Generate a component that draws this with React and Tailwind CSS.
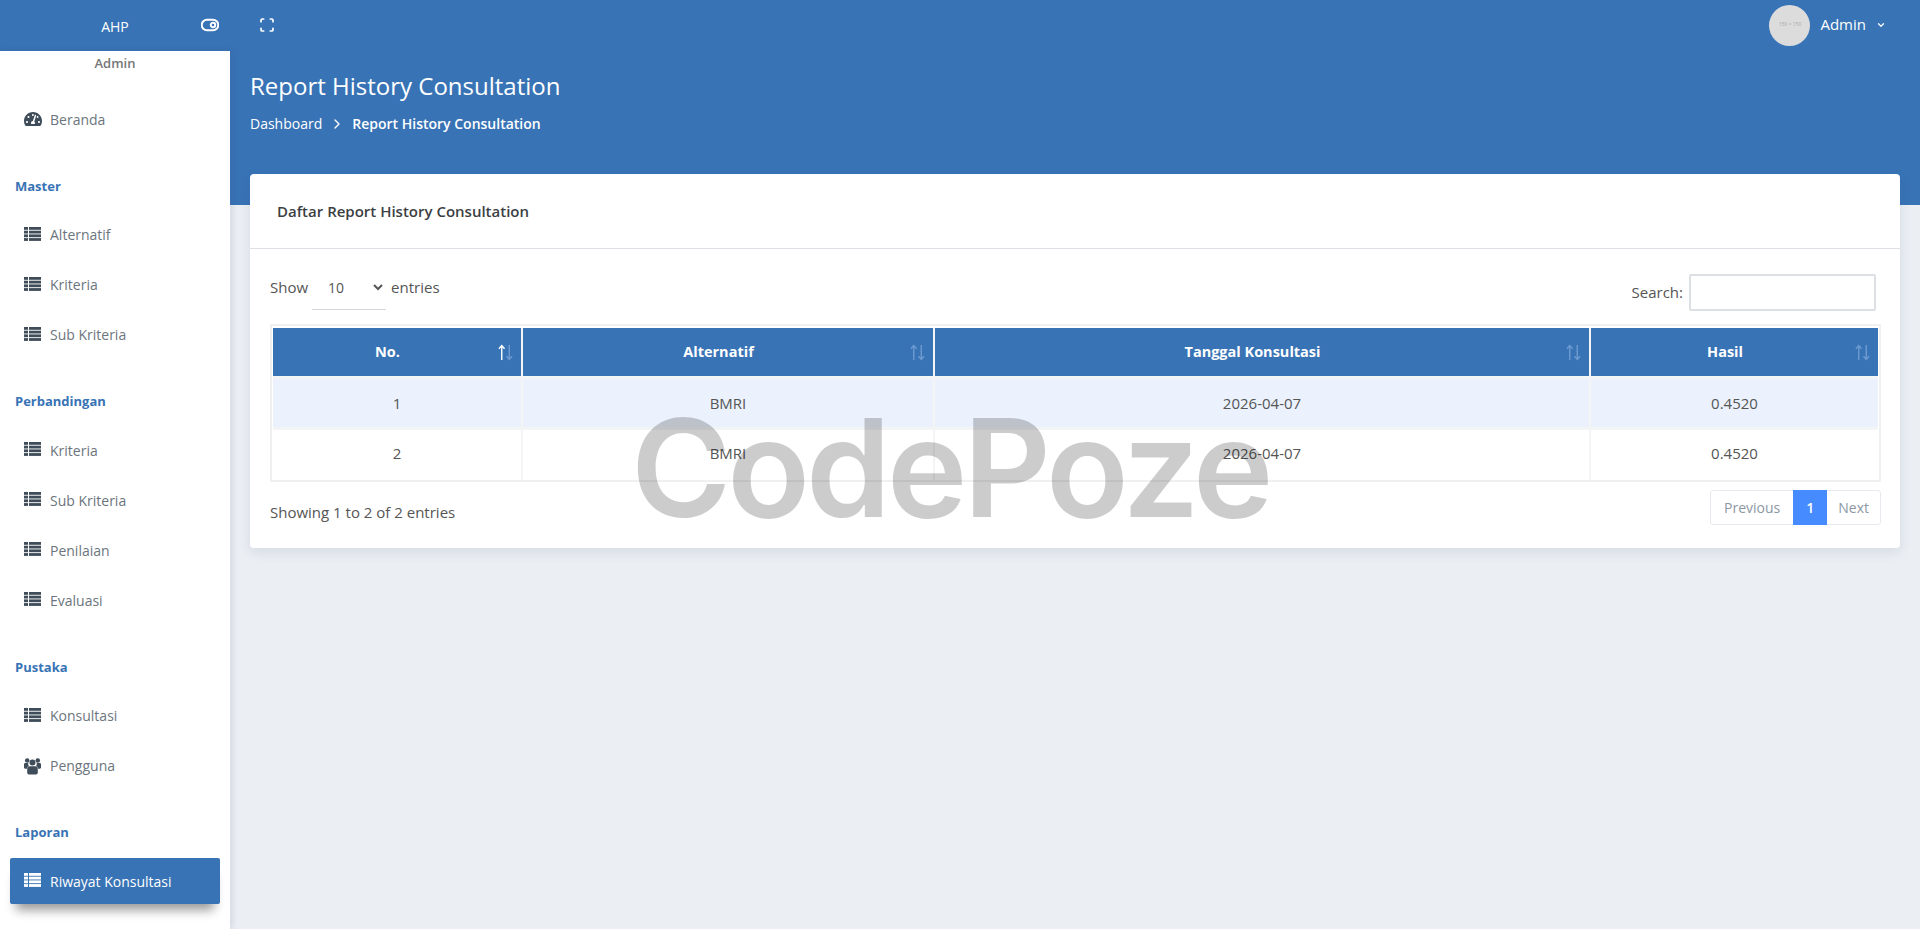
import { FaTachometerAlt } from "react-icons/fa";
import { FiToggleRight, FiChevronRight, FiChevronDown } from "react-icons/fi";
import { Scan } from "lucide-react";

const ListIcon = ({ className }) => (
  <svg viewBox="0 0 17 14" fill="currentColor" className={className}>
    <rect x="0" y="0" width="4" height="2.8" />
    <rect x="5" y="0" width="12" height="2.8" />
    <rect x="0" y="3.7" width="4" height="2.8" />
    <rect x="5" y="3.7" width="12" height="2.8" />
    <rect x="0" y="7.4" width="4" height="2.8" />
    <rect x="5" y="7.4" width="12" height="2.8" />
    <rect x="0" y="11.1" width="4" height="2.8" />
    <rect x="5" y="11.1" width="12" height="2.8" />
  </svg>
);

const UsersIcon = ({ className }) => (
  <svg viewBox="0 0 18 18" fill="currentColor" className={className}>
    <circle cx="3.4" cy="3.2" r="2.4" />
    <circle cx="14.6" cy="3.2" r="2.4" />
    <circle cx="9" cy="5.2" r="3.2" />
    <path d="M0 7.2a1.5 1.5 0 0 1 1.5-1.5h3a4.5 4.5 0 0 0 .6 3.2c-1 .5-1.8 1.5-2 2.9H1.2A1.2 1.2 0 0 1 0 10.6z" />
    <path d="M18 7.2a1.5 1.5 0 0 0-1.5-1.5h-3a4.5 4.5 0 0 1-.6 3.2c1 .5 1.8 1.5 2 2.9h1.9a1.2 1.2 0 0 0 1.2-1.2z" />
    <path d="M6 9.3h6a2.6 2.6 0 0 1 2.6 2.6v4.2a1.9 1.9 0 0 1-1.9 1.9H5.3a1.9 1.9 0 0 1-1.9-1.9v-4.2A2.6 2.6 0 0 1 6 9.3z" />
  </svg>
);

const groups = [
  { items: [{ label: "Beranda", icon: "gauge" }] },
  {
    title: "Master",
    items: [
      { label: "Alternatif", icon: "list" },
      { label: "Kriteria", icon: "list" },
      { label: "Sub Kriteria", icon: "list" },
    ],
  },
  {
    title: "Perbandingan",
    items: [
      { label: "Kriteria", icon: "list" },
      { label: "Sub Kriteria", icon: "list" },
      { label: "Penilaian", icon: "list" },
      { label: "Evaluasi", icon: "list" },
    ],
  },
  {
    title: "Pustaka",
    items: [
      { label: "Konsultasi", icon: "list" },
      { label: "Pengguna", icon: "users" },
    ],
  },
  {
    title: "Laporan",
    items: [{ label: "Riwayat Konsultasi", icon: "list", active: true }],
  },
];

const columns = [
  { label: "No.", width: "w-[249px]", sorted: true },
  { label: "Alternatif", width: "w-[412px]" },
  { label: "Tanggal Konsultasi", width: "w-[656px]" },
  { label: "Hasil", width: "" },
];

const rows = [
  { no: 1, name: "BMRI", date: "2026-04-07", result: "0.4520" },
  { no: 2, name: "BMRI", date: "2026-04-07", result: "0.4520" },
];

const NavIcon = ({ name, active }) => {
  const color = active ? "text-white" : "text-[#3f4c59]";
  if (name === "gauge") return <FaTachometerAlt className={`w-[18px] h-[18px] -mr-px ${color}`} />;
  if (name === "users") return <UsersIcon className={`w-[17px] h-[18px] ${color}`} />;
  return <ListIcon className={`w-[17px] h-[14px] -mt-[2px] ${color}`} />;
};

const NavItem = ({ item }) => (
  <div
    className={
      item.active
        ? "mb-1 mx-[10px] h-[46px] flex items-center pl-[14px] rounded-[2px] bg-[#3873b5] text-white shadow-[0_12px_10px_-6px_rgba(0,0,0,0.4)]"
        : "mb-1 mx-[10px] h-[46px] flex items-center pl-[14px] text-[#6c757d]"
    }
  >
    <NavIcon name={item.icon} active={item.active} />
    <span className="ml-[9px] text-[14px]">{item.label}</span>
  </div>
);

const Sidebar = () => (
  <aside className="w-[230px] shrink-0 bg-white shadow-[2px_0_6px_rgba(60,80,120,0.15)] z-10">
    <div className="h-[25px] flex items-center justify-center text-[13px] font-semibold text-[#777]">
      Admin
    </div>
    <div className="pt-[20px]">
      {groups.map((group, i) => (
        <div key={i}>
          {group.title && (
            <div className="mt-[33.5px] mb-[14px] h-[22px] pl-[15px] flex items-center text-[13px] font-bold text-[#3873b5]">
              {group.title}
            </div>
          )}
          {group.items.map((item) => (
            <NavItem key={item.label} item={item} />
          ))}
        </div>
      ))}
    </div>
  </aside>
);

const Topbar = () => (
  <header className="h-[51px] shrink-0 flex items-center bg-[#3873b5] text-white">
    <div className="w-[230px] text-center text-[14px] pt-[2px]">AHP</div>
    <FiToggleRight className="w-[18px] h-[18px] -ml-[29px] -mt-[2px]" strokeWidth={2.6} />
    <Scan className="w-[16px] h-[16px] ml-[40px] -mt-[2px]" strokeWidth={2.6} />
    <div className="ml-auto flex items-center pr-[34px] -mt-[1px]">
      <div className="w-[41px] h-[41px] rounded-full bg-[#dcdcdc] flex items-center justify-center text-[5px] text-[#a8a8a8]">
        150 × 150
      </div>
      <span className="ml-[10px] -mt-[2px] text-[15px] font-medium">Admin</span>
      <FiChevronDown className="ml-[10px] w-[10px] h-[10px]" strokeWidth={3} />
    </div>
  </header>
);

const SortArrows = ({ sorted }) => (
  <svg
    viewBox="0 0 16 18"
    fill="none"
    strokeWidth="1.5"
    className="absolute right-[8px] top-[16px] w-[15px] h-[17px]"
  >
    <path d="M4 17V2M1 5l3-3.5L7 5" stroke={sorted ? "#ffffff" : "#6d9ad0"} />
    <path d="M12 1v15M9 13l3 3.5 3-3.5" stroke="#6d9ad0" />
  </svg>
);

const Table = () => (
  <div className="border-2 border-[#eef0f2] pt-[2px] px-[1px]">
    <table className="w-full border-collapse text-[15px] text-[#555]">
      <thead>
        <tr>
          {columns.map((col) => (
            <th
              key={col.label}
              className={`relative h-[49px] pl-[10px] pr-[29px] text-center text-[14.5px] font-bold bg-[#3873b5] text-white border-2 border-[#f3f4f5] first:border-l-0 last:border-r-0 border-t-0 border-b-[3px] ${col.width}`}
            >
              {col.label}
              <SortArrows sorted={col.sorted} />
            </th>
          ))}
        </tr>
      </thead>
      <tbody>
        {rows.map((row, i) => (
          <tr key={row.no} className={i === 0 ? "bg-[#ebf2fd]" : "bg-white"}>
            {[row.no, row.name, row.date, row.result].map((value, j) => (
              <td
                key={j}
                className={
                  i === rows.length - 1
                    ? "h-[52px] pb-[3px] text-center border-x-2 border-[#f3f4f5] first:border-l-0 last:border-r-0"
                    : "h-[51px] pt-[1px] text-center border-2 border-b-[3px] border-[#f3f4f5] first:border-l-0 last:border-r-0"
                }
              >
                {value}
              </td>
            ))}
          </tr>
        ))}
      </tbody>
    </table>
  </div>
);

const Pagination = () => (
  <div className="flex h-[35px] text-[14px] rounded-[3px] border border-[#e6e9ed] text-[#8d97a3]">
    <span className="px-[13px] flex items-center">Previous</span>
    <span className="w-[34px] -my-px flex items-center justify-center font-semibold bg-[#468bff] text-white">1</span>
    <span className="px-[11px] flex items-center">Next</span>
  </div>
);

const Card = () => (
  <section className="relative -mt-[31px] mx-5 rounded-[4px] bg-white shadow-[0_4px_12px_rgba(60,80,120,0.12)]">
    <div className="h-[75px] flex items-center pl-[27px] border-b border-[#dde1e6] text-[15px] font-semibold text-[#3b3f44]">
      Daftar Report History Consultation
    </div>
    <div className="pl-5 pr-[19px] pt-[25px] pb-[23px] text-[15px] text-[#555]">
      <div className="flex items-start justify-between h-[36px] pr-[5px]">
        <label className="flex items-start leading-[27px]">
          Show
          <span className="ml-[4px] mr-[5px] h-[36px] border-b border-[#d5d8dc]">
            <select className="block w-[74px] h-[27px] pl-[12px] text-[14px] text-[#555] outline-none">
              <option>10</option>
            </select>
          </span>
          entries
        </label>
        <label className="flex items-center">
          Search:
          <input className="ml-[6px] w-[187px] h-[37px] rounded-[2px] border-2 border-[#dcdfe3] outline-none" />
        </label>
      </div>
      <div className="mt-[14px]">
        <Table />
      </div>
      <div className="mt-[8px] flex items-center justify-between">
        <span className="mt-[10px]">Showing 1 to 2 of 2 entries</span>
        <Pagination />
      </div>
    </div>
  </section>
);

export default function App() {
  return (
    <div className="relative min-h-screen flex flex-col bg-[#ebeef3] font-['Open_Sans',sans-serif] overflow-hidden">
      <Topbar />
      <div className="flex flex-1">
        <Sidebar />
        <main className="flex-1 min-w-0">
          <div className="h-[154px] px-5 pt-[19px] bg-[#3873b5] text-white">
            <h1 className="text-[24px] leading-[32px]">Report History Consultation</h1>
            <div className="mt-[11px] flex items-center text-[14px]">
              <span>Dashboard</span>
              <FiChevronRight className="mx-[7px] w-[16px] h-[16px]" />
              <span className="font-semibold">Report History Consultation</span>
            </div>
          </div>
          <Card />
        </main>
      </div>
      <div className="absolute left-[631px] top-[395px] pointer-events-none text-[136px] leading-[146px] font-semibold tracking-[-4px] text-black/20 font-['Inter',sans-serif]">
        CodePoze
      </div>
    </div>
  );
}
